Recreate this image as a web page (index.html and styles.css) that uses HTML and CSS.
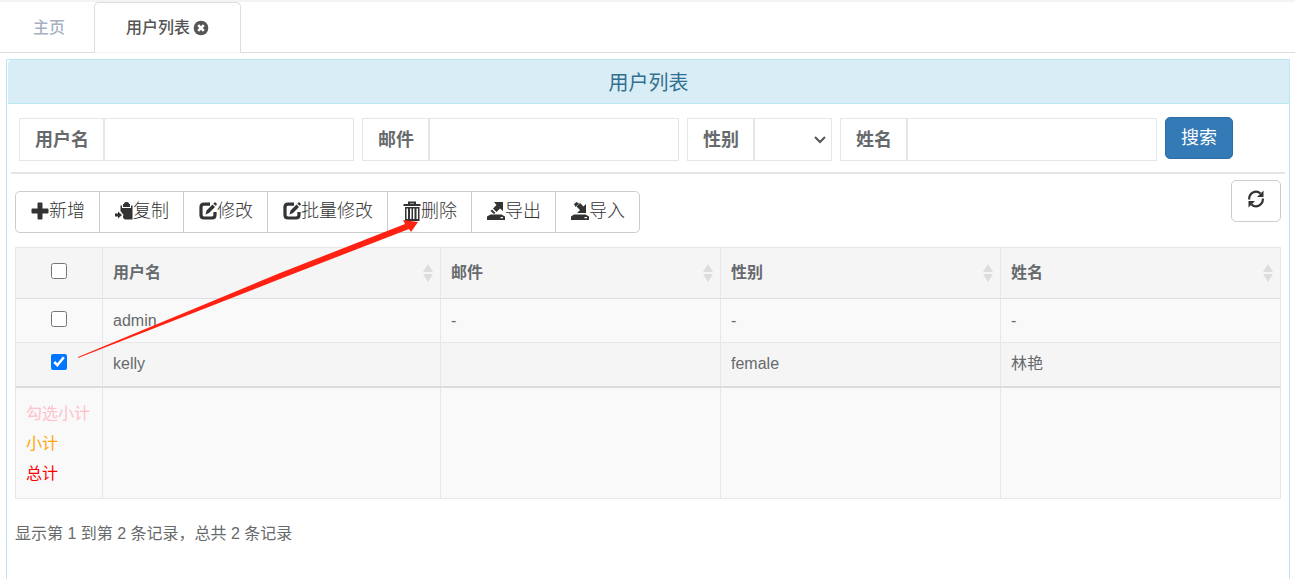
FILE: index.html
```html
<!DOCTYPE html>
<html lang="zh-CN">
<head>
    <meta charset="UTF-8">
    <meta name="viewport" content="width=device-width, initial-scale=1.0">
    <title>用户列表</title>
    <link rel="stylesheet" href="styles.css">
</head>
<body>

    <nav class="tabs">
        <a class="tab" href="#home">主页</a>
        <a class="tab active" href="#users">用户列表<svg class="close" viewBox="0 0 16 16"><circle cx="8" cy="8" r="7.3" fill="#555"/><path d="M5.2 5.2l5.6 5.6M10.8 5.2l-5.6 5.6" stroke="#fff" stroke-width="2.6"/></svg></a>
    </nav>

    <main class="panel">
        <h1 class="panel-heading">用户列表</h1>

        <form class="search-form">
            <div class="field">
                <label for="username">用户名</label>
                <input type="text" id="username">
            </div>
            <div class="field">
                <label for="email">邮件</label>
                <input type="text" id="email">
            </div>
            <div class="field">
                <label for="gender">性别</label>
                <div class="select-wrap">
                    <select id="gender"><option></option></select>
                    <svg class="caret" viewBox="0 0 12 8"><path d="M1 1l5 5 5-5" fill="none" stroke="#555" stroke-width="2"/></svg>
                </div>
            </div>
            <div class="field">
                <label for="realname">姓名</label>
                <input type="text" id="realname">
            </div>
            <button type="button" class="btn-search">搜索</button>
        </form>

        <div class="toolbar">
            <div class="btn-group">
                <button type="button"><svg class="icon" viewBox="0 0 18 18"><path d="M7.5 .5h3q1 0 1 1v5h5q1 0 1 1v3q0 1-1 1h-5v5q0 1-1 1h-3q-1 0-1-1v-5h-5q-1 0-1-1v-3q0-1 1-1h5v-5q0-1 1-1z"/></svg>新增</button>
                <button type="button"><svg class="icon" viewBox="0 0 18 18"><path d="M9 2q0-2 2-2h1q2 0 2 2h1v3H8V2zM5.500 3.500H7V6h9V3.500h1.500V17.500H10Q7 16 8.500 13L5.500 9zM0 11.500h3V9.500l4 3.500-4 3.500v-2H0z"/></svg>复制</button>
                <button type="button"><svg class="icon" viewBox="0 0 18 18"><path d="M11 2.200H5Q2 2.200 2 5.200V13q0 3 3 3h8q3 0 3-3v-3" fill="none" stroke="#333" stroke-width="3.200"/><path d="M6.500 12.500l1-4L13.500 2.500l2.500 2.500-6 6zM14.300 1.700l1.200-1.200q.5-.5 1 0l1.200 1.200q.5.500 0 1l-1 1z"/></svg>修改</button>
                <button type="button"><svg class="icon" viewBox="0 0 18 18"><path d="M11 2.200H5Q2 2.200 2 5.200V13q0 3 3 3h8q3 0 3-3v-3" fill="none" stroke="#333" stroke-width="3.200"/><path d="M6.500 12.500l1-4L13.500 2.500l2.500 2.500-6 6zM14.300 1.700l1.200-1.200q.5-.5 1 0l1.200 1.200q.5.500 0 1l-1 1z"/></svg>批量修改</button>
                <button type="button"><svg class="icon icon-trash" viewBox="0 0 17 20"><path d="M5.500 3V1.500h6V3M0 4h17" fill="none" stroke="#333" stroke-width="2"/><path d="M1.500 6H16v14H1.500zM3 7.500V18h1.500V7.500zm3.500 0V18H8V7.500zm3 0V18H11V7.500zm3.500 0V18h1.500V7.500z" fill-rule="evenodd"/></svg>删除</button>
                <button type="button"><svg class="icon" viewBox="0 0 18 18"><path d="M7 0h9v9l-3-2.500L9.500 10 6 6.500 9.500 3zM5 7.500l3.500 3.500-1.500 1L3.500 9zM3.500 12.500h11L18 14.500V18H0v-3.500zM13.500 15v1.200h2.500V15z" fill-rule="evenodd"/></svg>导出</button>
                <button type="button"><svg class="icon" viewBox="0 0 18 18"><path d="M15 11H6l3-3L5.500 4.500 9 1l3.500 3.500L15 2zM3 2l2.500-2L8 1.500 4.500 5zM3 12.500h11.500L18 14.500V18H0v-3.500zM13.500 15v1.200h2.500V15z" fill-rule="evenodd"/></svg>导入</button>
            </div>
            <button type="button" class="btn-refresh" aria-label="刷新"><svg class="icon" viewBox="0 0 18 18"><path d="M2.200 9.500A6.800 7.200 0 0 1 13.500 3.500M15.800 8.500A6.800 7.200 0 0 1 4.500 14.500" fill="none" stroke="#333" stroke-width="2.200"/><path d="M16.500 .5v6.500H10zM1.500 17.500V11H8z"/></svg></button>
        </div>

        <table class="user-table">
            <thead>
                <tr>
                    <th class="check"><input type="checkbox" aria-label="全选"></th>
                    <th class="name"><div class="sortable">用户名<svg viewBox="0 0 10 18"><path d="M5 0l5 8H0zM0 10h10l-5 8z"/></svg></div></th>
                    <th><div class="sortable">邮件<svg viewBox="0 0 10 18"><path d="M5 0l5 8H0zM0 10h10l-5 8z"/></svg></div></th>
                    <th><div class="sortable">性别<svg viewBox="0 0 10 18"><path d="M5 0l5 8H0zM0 10h10l-5 8z"/></svg></div></th>
                    <th><div class="sortable">姓名<svg viewBox="0 0 10 18"><path d="M5 0l5 8H0zM0 10h10l-5 8z"/></svg></div></th>
                </tr>
            </thead>
            <tbody>
                <tr>
                    <td class="check"><input type="checkbox" aria-label="admin"></td>
                    <td>admin</td>
                    <td>-</td>
                    <td>-</td>
                    <td>-</td>
                </tr>
                <tr class="selected">
                    <td class="check"><input type="checkbox" aria-label="kelly" checked></td>
                    <td>kelly</td>
                    <td></td>
                    <td>female</td>
                    <td>林艳</td>
                </tr>
            </tbody>
            <tfoot>
                <tr>
                    <td>
                        <div class="sum-checked">勾选小计</div>
                        <div class="sum-page">小计</div>
                        <div class="sum-total">总计</div>
                    </td>
                    <td></td>
                    <td></td>
                    <td></td>
                    <td></td>
                </tr>
            </tfoot>
        </table>

        <p class="page-info">显示第 1 到第 2 条记录，总共 2 条记录</p>

        <!-- arrow from the ticked row to the delete button -->
        <svg class="arrow" viewBox="0 0 340 140"><path d="M0 138L202 54 327 5l-2-4 15 2-7 10-2-3L202 60 0 139z" fill="#ff2213"/></svg>
    </main>

</body>
</html>
```
FILE: styles.css
```css
* {
    box-sizing: border-box;
}
body {
    display: flex;
    flex-direction: column;
    min-height: 100vh;
    margin: 0;
    border-top: 2px solid #f3f3f4;
    font-family: "Liberation Sans", "Noto Sans CJK SC", sans-serif;
    font-size: 16px;
    line-height: 24px;
    color: #676a6c;
    background: #fff;
}
button, input, select {
    font: inherit;
    margin: 0;
}
.tabs {
    display: flex;
    height: 51px;
    border-bottom: 1px solid #ddd;
}
.tab {
    display: flex;
    align-items: center;
    height: 51px;
    padding: 0 29px 0 33px;
    font-weight: 500;
    color: #a7b1c2;
    text-decoration: none;
}
.tab.active {
    padding: 0 31px;
    color: #555;
    background: #fff;
    border: 1px solid #ddd;
    border-bottom-color: #f3f3f4;
    border-radius: 5px 5px 0 0;
}
.close {
    width: 16px;
    height: 16px;
    margin-left: 3px;
}
.panel {
    position: relative;
    flex: 1;
    margin: 6px 5px 0 6px;
    border: 1px solid #bce8f1;
    border-bottom: 0;
}
.panel-heading {
    margin: 0 0 0 1px;
    padding: 10px 8px 6px;
    border-bottom: 1px solid #bce8f1;
    border-radius: 4px 0 0 0;
    font-size: 20px;
    font-weight: 400;
    line-height: 27px;
    text-align: center;
    color: #31708f;
    background: #d9edf7;
}
.search-form {
    display: flex;
    gap: 8px;
    margin: 0 4px;
    padding: 13px 8px 11px;
    border-bottom: 2px solid #e5e5e5;
}
.field {
    display: flex;
    height: 43px;
    margin-top: 1px;
}
.field label {
    display: flex;
    align-items: center;
    padding: 0 14px 0 15px;
    border: 1px solid #e5e6e7;
    font-size: 18px;
    font-weight: 700;
}
.field input, .field select {
    width: 250px;
    border: 1px solid #e5e6e7;
    border-radius: 0;
    padding: 6px 12px;
    background: #fff;
}
.select-wrap {
    position: relative;
    display: flex;
}
.field select {
    width: 78px;
    appearance: none;
}
.caret {
    position: absolute;
    right: 6px;
    top: 18px;
    width: 12px;
    height: 8px;
    pointer-events: none;
}
.btn-search {
    height: 42px;
    padding: 0 15px;
    border: 1px solid #2e6da4;
    border-radius: 5px;
    font-size: 18px;
    color: #fff;
    background: #337ab7;
}
.toolbar {
    display: flex;
    justify-content: space-between;
    align-items: flex-end;
    padding: 6px 8px 0;
}
.btn-group {
    display: flex;
    margin-top: 11px;
}
.btn-group button, .btn-refresh {
    display: flex;
    align-items: center;
    justify-content: center;
    height: 42px;
    padding: 0 14px 2px 15px;
    border: 1px solid #ccc;
    font-size: 18px;
    font-weight: 300;
    color: #333;
    background: #fff;
}
.btn-group button + button {
    margin-left: -1px;
}
.btn-group button:first-child {
    border-radius: 5px 0 0 5px;
}
.btn-group button:last-child {
    border-radius: 0 5px 5px 0;
}
.btn-group .icon-trash {
    width: 18px;
    height: 20px;
}
.btn-refresh {
    align-self: flex-start;
    width: 50px;
    padding: 0 0 4px;
    border-radius: 5px;
}
.icon {
    width: 18px;
    height: 18px;
    flex: none;
    fill: #333;
}
.user-table {
    width: calc(100% - 16px);
    margin: 14px 8px 0;
    border-collapse: collapse;
    table-layout: fixed;
    background: #f9f9f9;
}
.user-table th, .user-table td {
    padding: 9px 10px;
    border: 1px solid #e7e7e7;
    text-align: left;
}
.user-table th {
    height: 51px;
    border-bottom-color: #ddd;
    font-weight: 700;
    background: #f5f5f6;
}
.user-table tbody td {
    height: 44px;
}
.user-table .selected td {
    background: #f5f5f5;
}
.user-table .check {
    width: 87px;
    padding: 0;
}
.user-table .name {
    width: 338px;
}
.check input {
    display: block;
    width: 16px;
    height: 16px;
    margin: 0 auto 4px;
}
.sortable {
    display: flex;
    justify-content: space-between;
    align-items: center;
}
.sortable svg {
    width: 10px;
    height: 18px;
    margin-right: -3px;
    fill: #ddd;
}
.user-table tfoot td {
    height: 112px;
    padding: 11px 0 9px 10px;
    border-top: 2px solid #ddd;
    line-height: 30px;
}
.sum-checked {
    color: pink;
}
.sum-page {
    color: orange;
}
.sum-total {
    color: red;
}
.page-info {
    margin: 23px 8px;
}
.arrow {
    position: absolute;
    left: 71px;
    top: 159px;
    width: 340px;
    height: 140px;
    pointer-events: none;
}
```
